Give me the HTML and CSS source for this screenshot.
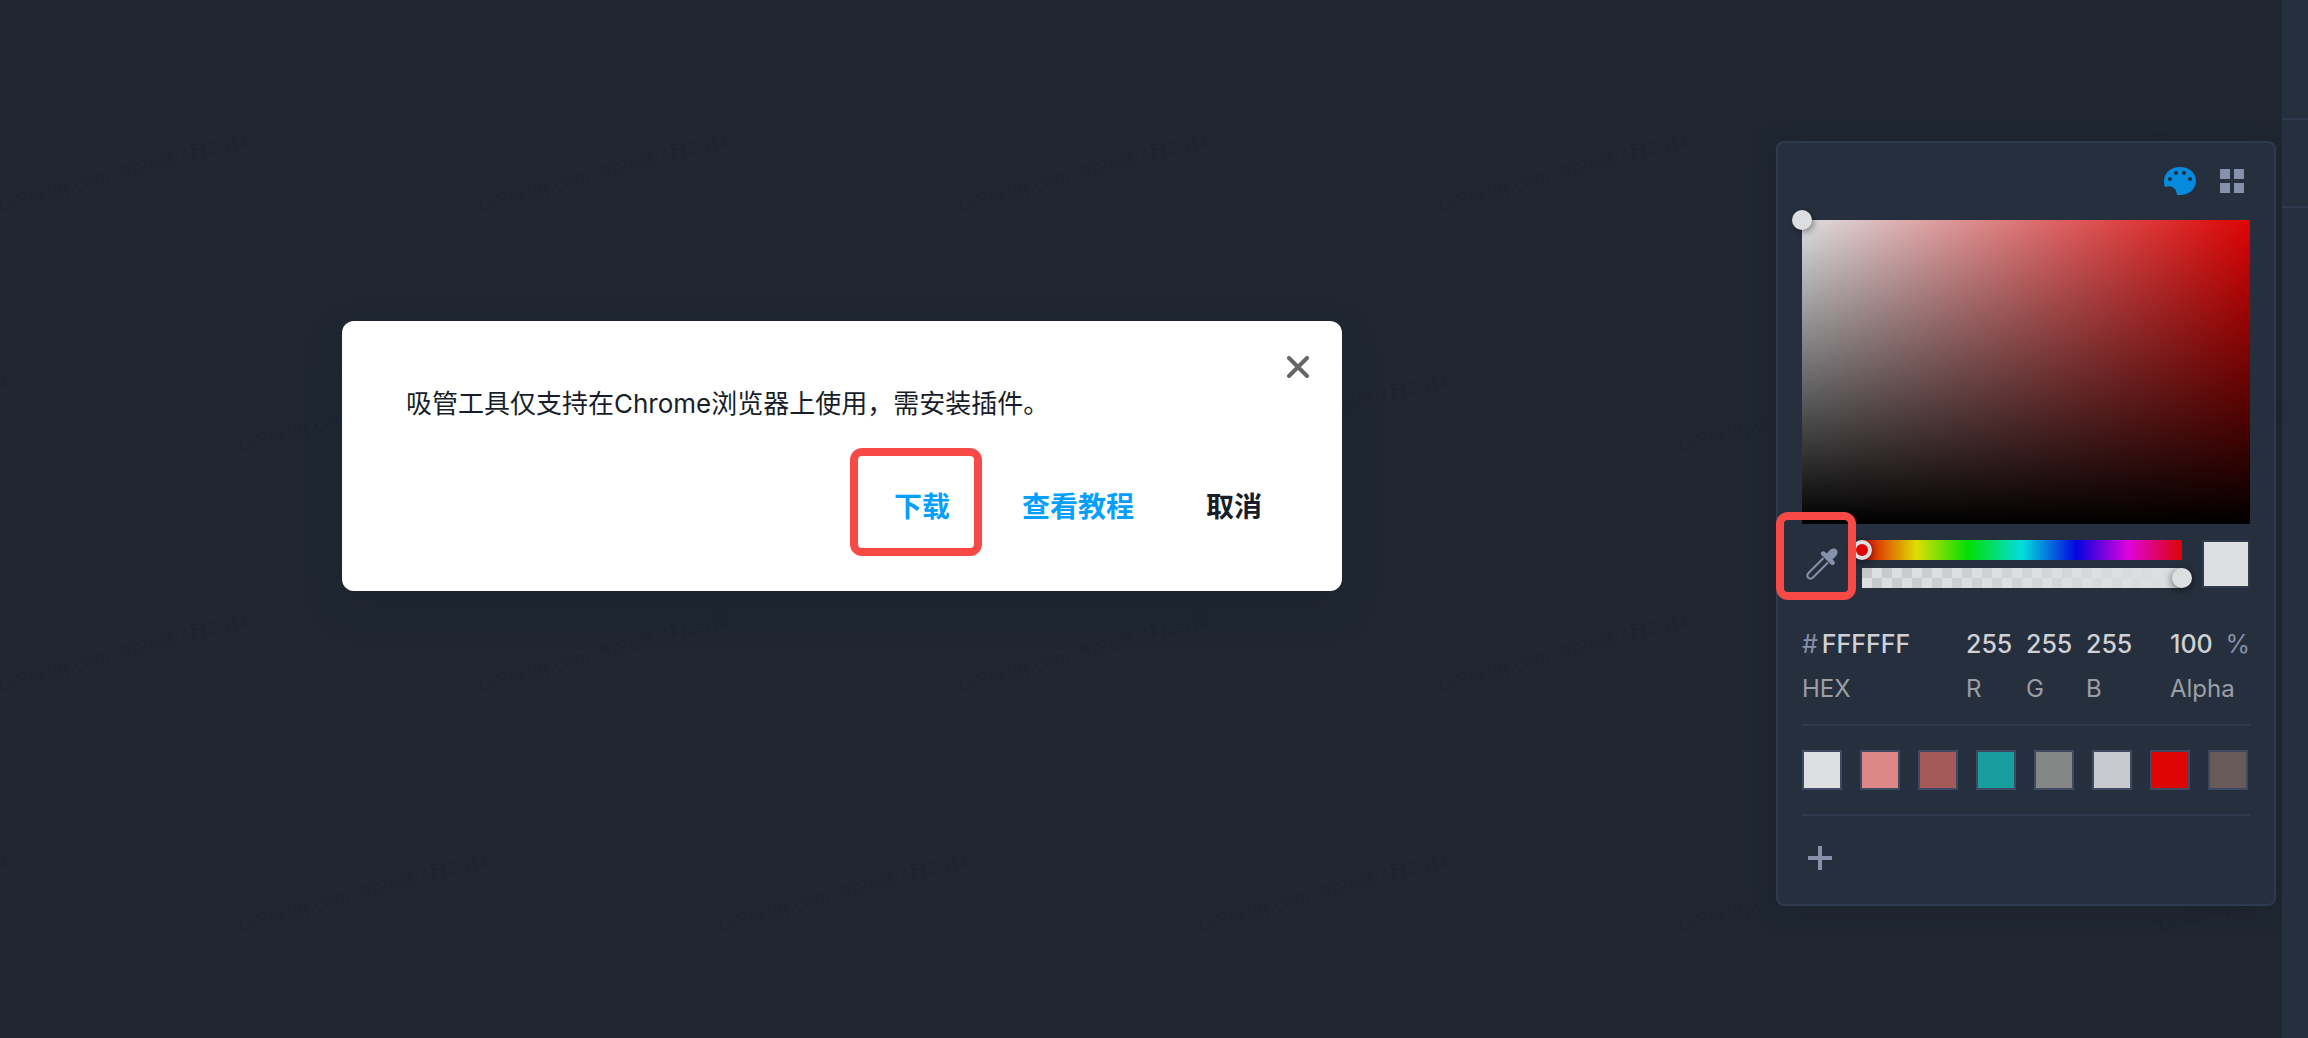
FILE: index.html
```html
<!DOCTYPE html>
<html lang="zh-CN">
<head>
  <meta charset="UTF-8">
  <title>取色器</title>
  <link rel="stylesheet" href="styles.css">
</head>
<body>

<svg class="watermark" aria-hidden="true">
  <defs>
    <pattern id="wm-odd" x="-20" y="0" width="480" height="480" patternUnits="userSpaceOnUse">
      <text transform="translate(17 213) rotate(-15)">123@qq.com 2025年7月25日</text>
    </pattern>
    <pattern id="wm-even" x="220" y="240" width="480" height="480" patternUnits="userSpaceOnUse">
      <text transform="translate(17 213) rotate(-15)">123@qq.com 2025年7月25日</text>
    </pattern>
  </defs>
  <rect width="100%" height="100%" fill="url(#wm-odd)"/>
  <rect width="100%" height="100%" fill="url(#wm-even)"/>
</svg>

<main class="stage">
  <!-- Plugin notice -->
  <section class="dialog" role="dialog" aria-labelledby="notice">
    <button class="close" type="button" aria-label="关闭">
      <svg width="22" height="22" viewBox="0 0 22 22"><path d="M2 2L20 20M20 2L2 20"/></svg>
    </button>
    <p id="notice">吸管工具仅支持在Chrome浏览器上使用，需安装插件。</p>
    <div class="actions">
      <button class="link marked" type="button">下载</button>
      <button class="link" type="button">查看教程</button>
      <button type="button">取消</button>
    </div>
  </section>

  <!-- Color picker -->
  <section class="picker">
    <div class="tabs">
      <button type="button" aria-label="调色板">
        <svg width="32" height="28" viewBox="0 0 32 28">
          <path class="palette" d="M16 0C25 0 32 6 32 14S25 28 16 28H13C12.500 21.500 8 17.500 1 20C0 18 0 16 0 14C0 6 7 0 16 0Z"/>
          <g class="holes"><circle cx="6" cy="12" r="2"/><circle cx="12" cy="6" r="2"/><circle cx="20" cy="6" r="2"/><circle cx="26" cy="12" r="2"/></g>
        </svg>
      </button>
      <button type="button" aria-label="色板">
        <svg width="24" height="24" viewBox="0 0 24 24"><path class="gray" d="M0 0h10v10H0zM14 0h10v10H14zM0 14h10v10H0zM14 14h10v10H14z"/></svg>
      </button>
    </div>

    <div class="saturation"><span class="handle"></span></div>

    <div class="controls">
      <button class="dropper" type="button" aria-label="吸管">
        <svg width="32" height="32" viewBox="0 0 32 32">
          <path class="gray" d="M20.500 5.500L24 2C26 0 29 0 30.500 1.500C32 3 32 6 30 8L26.500 11.500L28 13C29 14 29 15.500 28 16.500C27 17.500 26 17.500 25 16.500L15.500 7C14.500 6 14.500 5 15.500 4C16.500 3 18 3 19 4Z"/>
          <path class="tube" d="M17.500 10L2.500 25C1 26.500 1 28.500 2 29.500C3.500 31 5.500 31 7 29.500L22 14.500"/>
        </svg>
      </button>
      <div class="sliders">
        <div class="track hue"><input type="range" min="0" max="360" value="0" aria-label="色相"></div>
        <div class="track alpha"><input type="range" min="0" max="100" value="100" aria-label="透明度"></div>
      </div>
      <div class="preview"></div>
    </div>

    <div class="values">
      <div class="field"><div class="box"><span>#</span><input id="hex" type="text" value="FFFFFF"></div><label for="hex">HEX</label></div>
      <div class="field"><input id="r" type="text" value="255"><label for="r">R</label></div>
      <div class="field"><input id="g" type="text" value="255"><label for="g">G</label></div>
      <div class="field"><input id="b" type="text" value="255"><label for="b">B</label></div>
      <div class="field"><div class="box"><input id="alpha" type="text" value="100"><span>%</span></div><label for="alpha">Alpha</label></div>
    </div>

    <div class="swatches">
      <button class="c1" type="button" aria-label="#DCDEE0"></button>
      <button class="c2" type="button" aria-label="#DE8787"></button>
      <button class="c3" type="button" aria-label="#A65959"></button>
      <button class="c4" type="button" aria-label="#189E9E"></button>
      <button class="c5" type="button" aria-label="#858787"></button>
      <button class="c6" type="button" aria-label="#C7C9CF"></button>
      <button class="c7" type="button" aria-label="#DE0404"></button>
      <button class="c8" type="button" aria-label="#6A5B5B"></button>
    </div>

    <button class="add" type="button" aria-label="添加">
      <svg width="24" height="24" viewBox="0 0 24 24"><path class="gray" d="M10 0h4v10h10v4H14v10h-4V14H0v-4h10z"/></svg>
    </button>
  </section>
</main>

<aside class="rail">
  <div class="row first"></div>
  <div class="row"></div>
</aside>

</body>
</html>
```
FILE: styles.css
```css
* {
  box-sizing: border-box;
}
body {
  margin: 0;
  min-height: 100vh;
  display: flex;
  background: #202731;
  font-family: Inter, "Noto Sans CJK SC", sans-serif;
  font-size: 24px;
}
button {
  padding: 0;
  border: 0;
  background: none;
  font: inherit;
  color: inherit;
  cursor: pointer;
}
svg {
  display: block;
}
.watermark {
  position: absolute;
  inset: 0;
  width: 100%;
  height: 100%;
  pointer-events: none;
}
.watermark text {
  font-family: "Liberation Sans", "Noto Sans CJK SC", sans-serif;
  font-size: 20px;
  fill: #1d232e;
}
.stage {
  position: relative;
  flex: 1;
  display: flex;
  justify-content: space-between;
  align-items: flex-start;
  padding: 141px 6px 0 342px;
}

/* dialog */
.dialog {
  position: relative;
  width: 1000px;
  margin-top: 180px;
  padding: 64px 80px 64px 64px;
  border-radius: 12px;
  background: #fff;
  color: #181e29;
  box-shadow: 0 16px 40px rgba(24, 30, 41, 0.3);
}
.dialog p {
  margin: 0;
  font-size: 26px;
  line-height: 38px;
}
.close {
  position: absolute;
  top: 35px;
  right: 33px;
}
.close path {
  stroke: #666;
  stroke-width: 4;
  stroke-linecap: round;
}
.actions {
  display: flex;
  justify-content: flex-end;
  gap: 72px;
  margin-top: 64px;
  font-size: 28px;
  font-weight: bold;
  line-height: 40px;
}
.link {
  color: #049fff;
}

/* red frames round the two steps */
.marked, .dropper {
  position: relative;
}
.marked::after, .dropper::after {
  content: "";
  position: absolute;
  z-index: 1;
  border: 8px solid #f74a46;
  border-radius: 12px;
}
.marked::after {
  inset: -39px -32px -29px -44px;
}
.dropper::after {
  inset: -36px -18px -20px -30px;
}

/* picker */
.picker {
  width: 500px;
  padding: 24px;
  border: 2px solid #2f3a4e;
  border-radius: 8px;
  background: #262f3d;
  box-shadow: 0 4px 24px rgba(24, 30, 41, 0.5);
}
.tabs {
  display: flex;
  justify-content: flex-end;
  align-items: center;
  gap: 24px;
  height: 28px;
  margin-right: 6px;
}
.palette {
  fill: #058ade;
}
.holes {
  fill: #262f3d;
}
.gray {
  fill: #8691ab;
}
.tube {
  fill: none;
  stroke: #8691ab;
  stroke-width: 2;
}
.saturation {
  position: relative;
  height: 304px;
  margin-top: 25px;
  background: linear-gradient(to top, #000, transparent), linear-gradient(to right, #dcdee0, #de0404);
}
.handle {
  position: absolute;
  top: -10px;
  left: -10px;
  width: 20px;
  height: 20px;
  border-radius: 50%;
  background: #dcdee0;
  box-shadow: 2px 2px 6px rgba(0, 0, 0, 0.4);
}
.controls {
  display: flex;
  align-items: center;
  margin-top: 16px;
}
.dropper {
  margin-left: 4px;
}
.sliders {
  flex: 1;
  margin: 0 20px 0 24px;
}
.track {
  height: 20px;
}
.hue {
  background: linear-gradient(to right, #de0404, #dede04 17%, #04de04 33%, #04dede 50%, #0404de 67%, #de04de 83%, #de0404);
}
.alpha {
  margin-top: 8px;
  background: linear-gradient(to right, transparent, #dcdee0), repeating-conic-gradient(#dcdee0 0 25%, #c7c8ca 0 50%) 0 0 / 20px 20px;
}
.track input {
  display: block;
  appearance: none;
  width: calc(100% + 20px);
  height: 20px;
  margin: 0 -10px;
  background: none;
}
.track input::-webkit-slider-thumb {
  appearance: none;
  width: 20px;
  height: 20px;
  border: 4px solid #dcdee0;
  border-radius: 50%;
  background: #dcdee0;
  box-shadow: 0 2px 8px rgba(0, 0, 0, 0.6);
}
.hue input::-webkit-slider-thumb {
  background: #de0404;
}
.preview {
  width: 48px;
  height: 48px;
  border: 2px solid #2f3a4e;
  background: #dcdee0;
}
.values {
  display: grid;
  grid-template-columns: 164px 60px 60px 84px 1fr;
  margin-top: 40px;
  padding-bottom: 19px;
  border-bottom: 2px solid #2f3a4e;
}
.field input {
  display: block;
  width: 100%;
  min-width: 0;
  height: 32px;
  padding: 0;
  border: 0;
  background: none;
  font: inherit;
  font-size: 25px;
  font-weight: 500;
  color: #cfd1d6;
}
.field label {
  display: block;
  margin-top: 13px;
  line-height: 32px;
  color: #9b9fa5;
}
.box {
  display: flex;
  gap: 4px;
  font-size: 25px;
  line-height: 32px;
  color: #8691ab;
}
.swatches {
  display: flex;
  gap: 18px;
  padding: 24px 0;
  border-bottom: 2px solid #2f3a4e;
}
.swatches button {
  width: 40px;
  height: 40px;
  border: 2px solid #3d4a61;
}
.c1 { background: #dcdee0; }
.c2 { background: #de8787; }
.c3 { background: #a65959; }
.c4 { background: #189e9e; }
.c5 { background: #858787; }
.c6 { background: #c7c9cf; }
.c7 { background: #de0404; }
.c8 { background: #6a5b5b; }
.add {
  margin: 30px 6px 10px;
}

/* sidebar */
.rail {
  position: relative;
  width: 26px;
  background: #262f3d;
}
.row {
  height: 88px;
  border-bottom: 2px solid #2f3a4e;
}
.first {
  height: 120px;
}
```
